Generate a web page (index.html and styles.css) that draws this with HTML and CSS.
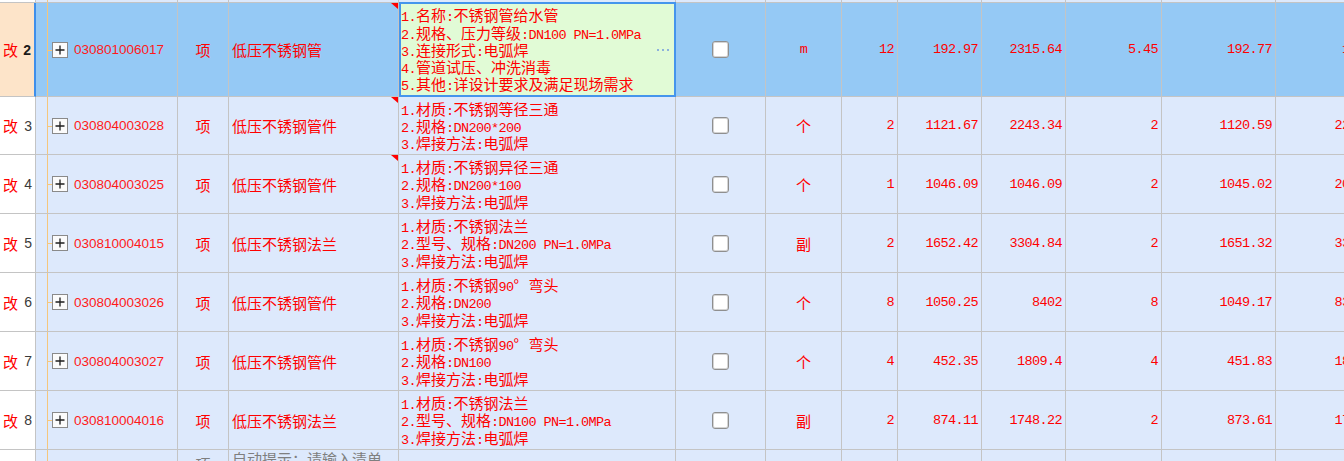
FILE: index.html
```html
<!DOCTYPE html>
<html lang="zh-CN">
<head>
<meta charset="utf-8">
<title>清单</title>
<link rel="stylesheet" href="styles.css">
</head>
<body>
<div class="grid">
  <div class="row ghost">
    <div class="c hdr"></div><div class="c code"></div><div class="c"></div><div class="c"></div><div class="c"></div><div class="c"></div><div class="c"></div><div class="c"></div><div class="c"></div><div class="c"></div><div class="c"></div><div class="c"></div><div class="c"></div>
  </div>

  <div class="row sel">
    <div class="c hdr"><span class="gai">改</span><span class="no">2</span></div>
    <div class="c code"><svg class="plus" width="16" height="16" viewBox="0 0 16 16"><rect x="0.5" y="0.5" width="15" height="15" fill="#fbfbfb" stroke="#8a8a8a"/><path d="M3.5 8h9M8 3.5v9" stroke="#1e1e1e" stroke-width="1.3"/></svg><span class="codeno">030801006017</span></div>
    <div class="c mid">项</div>
    <div class="c name">低压不锈钢管<span class="flag"></span></div>
    <div class="c desc">
      <div class="ln"><span class="a">1.</span>名称<span class="a">:</span>不锈钢管给水管</div>
      <div class="ln"><span class="a">2.</span>规格、压力等级<span class="a">:DN100 PN=1.0MPa</span></div>
      <div class="ln"><span class="a">3.</span>连接形式<span class="a">:</span>电弧焊</div>
      <div class="ln"><span class="a">4.</span>管道试压、冲洗消毒</div>
      <div class="ln"><span class="a">5.</span>其他<span class="a">:</span>详设计要求及满足现场需求</div>
      <span class="more"></span>
    </div>
    <div class="c mid"><span class="cb"></span></div>
    <div class="c mid"><span class="a">m</span></div>
    <div class="c num">12</div>
    <div class="c num">192.97</div>
    <div class="c num">2315.64</div>
    <div class="c num">5.45</div>
    <div class="c num">192.77</div>
    <div class="c num">1050.6</div>
  </div>

  <div class="row short">
    <div class="c hdr"><span class="gai">改</span><span class="no">3</span></div>
    <div class="c code"><svg class="plus" width="16" height="16" viewBox="0 0 16 16"><rect x="0.5" y="0.5" width="15" height="15" fill="#fbfbfb" stroke="#8a8a8a"/><path d="M3.5 8h9M8 3.5v9" stroke="#1e1e1e" stroke-width="1.3"/></svg><span class="codeno">030804003028</span></div>
    <div class="c mid">项</div>
    <div class="c name">低压不锈钢管件<span class="flag"></span></div>
    <div class="c desc">
      <div class="ln"><span class="a">1.</span>材质<span class="a">:</span>不锈钢等径三通</div>
      <div class="ln"><span class="a">2.</span>规格<span class="a">:DN200*200</span></div>
      <div class="ln"><span class="a">3.</span>焊接方法<span class="a">:</span>电弧焊</div>
    </div>
    <div class="c mid"><span class="cb"></span></div>
    <div class="c mid">个</div>
    <div class="c num">2</div>
    <div class="c num">1121.67</div>
    <div class="c num">2243.34</div>
    <div class="c num">2</div>
    <div class="c num">1120.59</div>
    <div class="c num">2241.18</div>
  </div>

  <div class="row">
    <div class="c hdr"><span class="gai">改</span><span class="no">4</span></div>
    <div class="c code"><svg class="plus" width="16" height="16" viewBox="0 0 16 16"><rect x="0.5" y="0.5" width="15" height="15" fill="#fbfbfb" stroke="#8a8a8a"/><path d="M3.5 8h9M8 3.5v9" stroke="#1e1e1e" stroke-width="1.3"/></svg><span class="codeno">030804003025</span></div>
    <div class="c mid">项</div>
    <div class="c name">低压不锈钢管件<span class="flag"></span></div>
    <div class="c desc">
      <div class="ln"><span class="a">1.</span>材质<span class="a">:</span>不锈钢异径三通</div>
      <div class="ln"><span class="a">2.</span>规格<span class="a">:DN200*100</span></div>
      <div class="ln"><span class="a">3.</span>焊接方法<span class="a">:</span>电弧焊</div>
    </div>
    <div class="c mid"><span class="cb"></span></div>
    <div class="c mid">个</div>
    <div class="c num">1</div>
    <div class="c num">1046.09</div>
    <div class="c num">1046.09</div>
    <div class="c num">2</div>
    <div class="c num">1045.02</div>
    <div class="c num">2090.04</div>
  </div>

  <div class="row">
    <div class="c hdr"><span class="gai">改</span><span class="no">5</span></div>
    <div class="c code"><svg class="plus" width="16" height="16" viewBox="0 0 16 16"><rect x="0.5" y="0.5" width="15" height="15" fill="#fbfbfb" stroke="#8a8a8a"/><path d="M3.5 8h9M8 3.5v9" stroke="#1e1e1e" stroke-width="1.3"/></svg><span class="codeno">030810004015</span></div>
    <div class="c mid">项</div>
    <div class="c name">低压不锈钢法兰</div>
    <div class="c desc">
      <div class="ln"><span class="a">1.</span>材质<span class="a">:</span>不锈钢法兰</div>
      <div class="ln"><span class="a">2.</span>型号、规格<span class="a">:DN200 PN=1.0MPa</span></div>
      <div class="ln"><span class="a">3.</span>焊接方法<span class="a">:</span>电弧焊</div>
    </div>
    <div class="c mid"><span class="cb"></span></div>
    <div class="c mid">副</div>
    <div class="c num">2</div>
    <div class="c num">1652.42</div>
    <div class="c num">3304.84</div>
    <div class="c num">2</div>
    <div class="c num">1651.32</div>
    <div class="c num">3302.64</div>
  </div>

  <div class="row">
    <div class="c hdr"><span class="gai">改</span><span class="no">6</span></div>
    <div class="c code"><svg class="plus" width="16" height="16" viewBox="0 0 16 16"><rect x="0.5" y="0.5" width="15" height="15" fill="#fbfbfb" stroke="#8a8a8a"/><path d="M3.5 8h9M8 3.5v9" stroke="#1e1e1e" stroke-width="1.3"/></svg><span class="codeno">030804003026</span></div>
    <div class="c mid">项</div>
    <div class="c name">低压不锈钢管件</div>
    <div class="c desc">
      <div class="ln"><span class="a">1.</span>材质<span class="a">:</span>不锈钢<span class="a">90</span><span class="deg">°</span>弯头</div>
      <div class="ln"><span class="a">2.</span>规格<span class="a">:DN200</span></div>
      <div class="ln"><span class="a">3.</span>焊接方法<span class="a">:</span>电弧焊</div>
    </div>
    <div class="c mid"><span class="cb"></span></div>
    <div class="c mid">个</div>
    <div class="c num">8</div>
    <div class="c num">1050.25</div>
    <div class="c num">8402</div>
    <div class="c num">8</div>
    <div class="c num">1049.17</div>
    <div class="c num">8393.36</div>
  </div>

  <div class="row">
    <div class="c hdr"><span class="gai">改</span><span class="no">7</span></div>
    <div class="c code"><svg class="plus" width="16" height="16" viewBox="0 0 16 16"><rect x="0.5" y="0.5" width="15" height="15" fill="#fbfbfb" stroke="#8a8a8a"/><path d="M3.5 8h9M8 3.5v9" stroke="#1e1e1e" stroke-width="1.3"/></svg><span class="codeno">030804003027</span></div>
    <div class="c mid">项</div>
    <div class="c name">低压不锈钢管件</div>
    <div class="c desc">
      <div class="ln"><span class="a">1.</span>材质<span class="a">:</span>不锈钢<span class="a">90</span><span class="deg">°</span>弯头</div>
      <div class="ln"><span class="a">2.</span>规格<span class="a">:DN100</span></div>
      <div class="ln"><span class="a">3.</span>焊接方法<span class="a">:</span>电弧焊</div>
    </div>
    <div class="c mid"><span class="cb"></span></div>
    <div class="c mid">个</div>
    <div class="c num">4</div>
    <div class="c num">452.35</div>
    <div class="c num">1809.4</div>
    <div class="c num">4</div>
    <div class="c num">451.83</div>
    <div class="c num">1807.32</div>
  </div>

  <div class="row">
    <div class="c hdr"><span class="gai">改</span><span class="no">8</span></div>
    <div class="c code"><svg class="plus" width="16" height="16" viewBox="0 0 16 16"><rect x="0.5" y="0.5" width="15" height="15" fill="#fbfbfb" stroke="#8a8a8a"/><path d="M3.5 8h9M8 3.5v9" stroke="#1e1e1e" stroke-width="1.3"/></svg><span class="codeno">030810004016</span></div>
    <div class="c mid">项</div>
    <div class="c name">低压不锈钢法兰</div>
    <div class="c desc">
      <div class="ln"><span class="a">1.</span>材质<span class="a">:</span>不锈钢法兰</div>
      <div class="ln"><span class="a">2.</span>型号、规格<span class="a">:DN100 PN=1.0MPa</span></div>
      <div class="ln"><span class="a">3.</span>焊接方法<span class="a">:</span>电弧焊</div>
    </div>
    <div class="c mid"><span class="cb"></span></div>
    <div class="c mid">副</div>
    <div class="c num">2</div>
    <div class="c num">874.11</div>
    <div class="c num">1748.22</div>
    <div class="c num">2</div>
    <div class="c num">873.61</div>
    <div class="c num">1747.22</div>
  </div>

  <div class="row tail">
    <div class="c hdr"></div>
    <div class="c code"></div>
    <div class="c mid top hint unit-hint">项</div>
    <div class="c name top hint wrap">自动提示：请输入清单名称</div>
    <div class="c"></div><div class="c"></div><div class="c"></div><div class="c"></div><div class="c"></div><div class="c"></div><div class="c"></div><div class="c"></div><div class="c"></div>
  </div>
</div>
</body>
</html>
```

FILE: styles.css
```css
html, body {
  margin: 0;
  padding: 0;
  overflow: hidden;
  background: #ffffff;
}

body {
  width: 1344px;
  height: 461px;
  font-family: "Noto Sans CJK SC", "Liberation Sans", sans-serif;
  font-size: 15px;
  color: #ff0000;
}

.grid {
  width: 1391px;
}

.row {
  display: grid;
  grid-template-columns: 36px 142px 51px 170px 277px 90px 76px 56px 84px 84px 96px 114px 115px;
  height: 59px;
}

.row.ghost { height: 3px; }
.row.sel { height: 94px; }
.row.short { height: 58px; }
.row.tail { height: 40px; }

.c {
  box-sizing: border-box;
  border-right: 1px solid #c4c4c4;
  border-bottom: 1px solid #c4c4c4;
  background: #dde9fc;
  display: flex;
  align-items: center;
  position: relative;
  min-width: 0;
  overflow: hidden;
  white-space: nowrap;
}

.hdr {
  background: #ffffff;
  justify-content: space-between;
  padding: 0 3px;
}

.sel .c { background: #95c9f5; }

.sel .hdr {
  background: #fde4c9;
  border-right: 2px solid #3f8fea;
}

.gai {
  color: #ff0000;
  line-height: 17px;
}

.no {
  font-family: "Liberation Sans", sans-serif;
  font-size: 14px;
  color: #3a3a3a;
}

.sel .no {
  font-weight: bold;
  color: #1a1a1a;
}

.code {
  padding-left: 16px;
  gap: 6px;
}

.code::before {
  content: "";
  position: absolute;
  left: 11px;
  top: 0;
  bottom: 0;
  width: 1px;
  background: #f5c67c;
}

.row:not(.ghost):not(.tail) .code::after {
  content: "";
  position: absolute;
  left: 11px;
  top: 50%;
  width: 5px;
  height: 1px;
  background: #f5c67c;
}

.plus {
  display: block;
  flex: none;
  position: relative;
  z-index: 1;
}

.codeno {
  font-family: "Liberation Sans", sans-serif;
  font-size: 13.5px;
  color: #ff1a1a;
}

.mid {
  justify-content: center;
}

.name {
  padding-left: 3px;
}

.flag {
  position: absolute;
  top: 0;
  right: 0;
  width: 0;
  height: 0;
  border-top: 6px solid #ff0000;
  border-left: 7px solid transparent;
}

.desc {
  flex-direction: column;
  align-items: flex-start;
  justify-content: center;
  padding-left: 2px;
}

.ln {
  height: 17.3px;
  line-height: 17.3px;
  flex: none;
}

.a {
  font-family: "Liberation Mono", monospace;
  font-size: 13.5px;
  letter-spacing: -0.6px;
  line-height: 1;
}

.deg {
  display: inline-block;
  width: 15px;
  line-height: 1;
}

.sel .desc {
  background: #e1fbd6;
  border: 2px solid #4595ec;
  margin-top: -1px;
  padding-left: 0;
  z-index: 2;
}

.more {
  position: absolute;
  right: 15px;
  top: 45px;
  width: 2px;
  height: 2px;
  background: #8db2dc;
  box-shadow: 5px 0 0 #8db2dc, 10px 0 0 #8db2dc;
}

.cb {
  display: block;
  width: 17px;
  height: 17px;
  box-sizing: border-box;
  border: 1px solid #8f8f8f;
  border-radius: 3px;
  background: #ffffff;
  box-shadow: inset 0 0 0 1px #d4d4d4;
}

.num {
  justify-content: flex-end;
  padding-right: 3px;
  font-family: "Liberation Mono", monospace;
  font-size: 13.5px;
  letter-spacing: -0.6px;
}

.top {
  align-items: flex-start;
}

.hint {
  color: #7f7f7f;
  line-height: 17px;
}

.wrap {
  white-space: normal;
  padding-right: 10px;
}

.unit-hint {
  padding-top: 5px;
}
```
